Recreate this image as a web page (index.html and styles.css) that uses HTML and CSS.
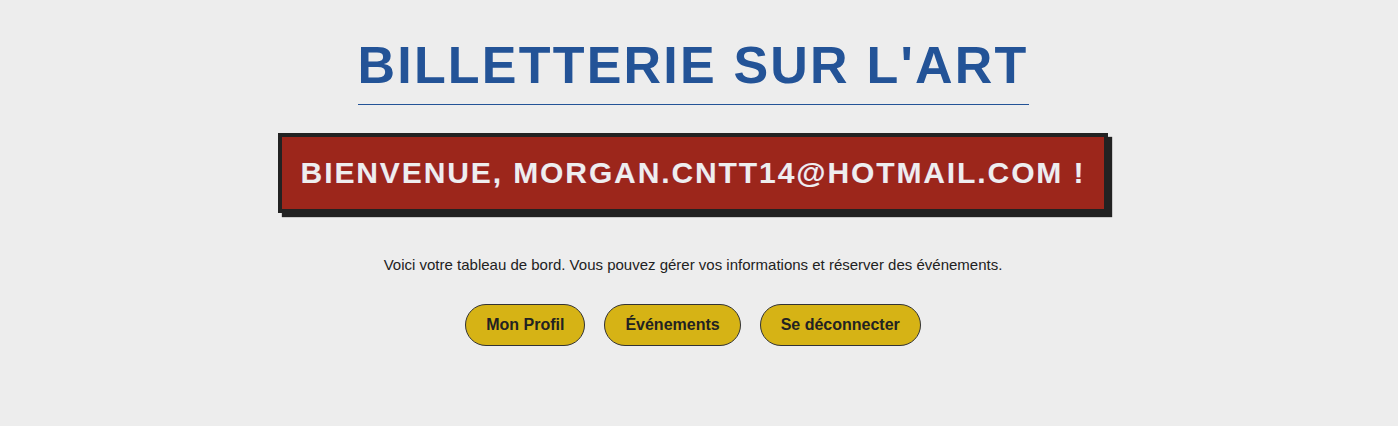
FILE: index.html
```html
<!DOCTYPE html>
<html lang="fr">
<head>
  <meta charset="UTF-8" />
  <title>Tableau de bord | Billetterie sur l'Art</title>
  <meta name="viewport" content="width=device-width, initial-scale=1.0" />
  <link rel="stylesheet" href="styles.css">
</head>
<body>

  <!-- En-tête -->
  <div class="container">
    <h1 class="site-title">BILLETTERIE SUR L'ART</h1>

    <div class="welcome-box">
      <h2>Bienvenue, morgan.cntt14@hotmail.com !</h2>
    </div>

    <p class="intro">Voici votre tableau de bord. Vous pouvez gérer vos informations et réserver des événements.</p>

    <!-- Navigation -->
    <div class="actions">
      <a class="btn" href="#">Mon Profil</a>
      <a class="btn" href="#">Événements</a>
      <a class="btn" href="#">Se déconnecter</a>
    </div>
  </div>

</body>
</html>
```

FILE: styles.css
```css
* { box-sizing: border-box; }

body {
  margin: 0;
  padding: 0 12px 0 0;
  background-color: #ededed;
  color: #222;
  font-family: 'Liberation Sans', Arial, sans-serif;
}

.container {
  display: flex;
  flex-direction: column;
  align-items: center;
  text-align: center;
  padding-top: 35px;
}

.site-title {
  margin: 0;
  font-size: 52px;
  font-weight: bold;
  letter-spacing: 2.2px;
  color: #235397;
  padding-bottom: 9px;
  border-bottom: 1px solid #235397;
}

.welcome-box {
  margin-top: 28px;
  background-color: #9c261b;
  border: 4px solid #222;
  box-shadow: 4px 4px 1px #222;
  padding: 19px 19px;
}

.welcome-box h2 {
  margin: 0;
  font-size: 30px;
  letter-spacing: 1.9px;
  text-transform: uppercase;
  color: #eee;
  text-shadow: 1px 0 0 rgba(160, 40, 160, 0.4);
}

.intro {
  margin: 43px 0 0;
  font-size: 15px;
}

.actions {
  display: flex;
  gap: 19px;
  margin-top: 31px;
}

.btn {
  display: inline-block;
  padding: 11px 20px;
  font-size: 16px;
  font-weight: bold;
  color: #222;
  text-decoration: none;
  background-color: #d6b315;
  border: 1px solid #333;
  border-radius: 25px;
}

.btn:hover {
  background-color: #c4a210;
}
```
